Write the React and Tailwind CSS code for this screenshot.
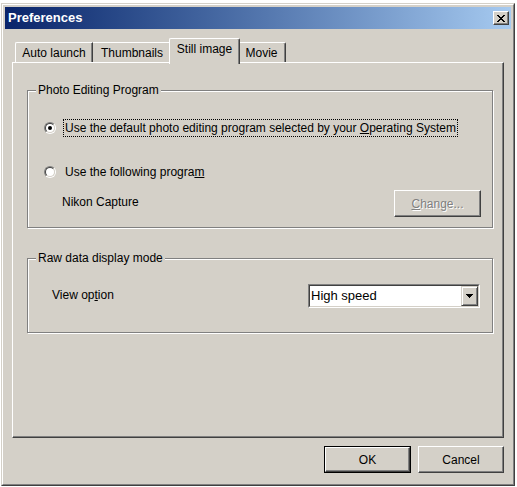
import React from "react";

const face = "bg-[#d4d0c8]";

function Radio({ checked }) {
  return (
    <div className="w-[12px] h-[12px] rounded-full border border-t-[#808080] border-l-[#808080] border-r-white border-b-white flex-none">
      <div className="w-full h-full rounded-full border border-t-[#404040] border-l-[#404040] border-r-[#d4d0c8] border-b-[#d4d0c8] bg-white flex items-center justify-center">
        {checked && <div className="w-[4px] h-[4px] rounded-full bg-black" />}
      </div>
    </div>
  );
}

function Button({ children, def, disabled, className = "" }) {
  const inner = (
    <div
      className={`w-full h-full flex items-center justify-center border border-t-white border-l-white border-r-[#404040] border-b-[#404040] shadow-[inset_-1px_-1px_0_#808080] ${face} ${
        disabled ? "text-[#808080] [text-shadow:1px_1px_0_#ffffff]" : "text-black"
      }`}
    >
      {children}
    </div>
  );
  if (def) {
    return <div className={`border border-black ${className}`}>{inner}</div>;
  }
  return <div className={className}>{inner}</div>;
}

function Group({ title, className = "", children }) {
  return (
    <div className={`relative border border-[#808080] shadow-[inset_1px_1px_0_#ffffff,1px_1px_0_#ffffff] ${className}`}>
      <span className={`absolute -top-[8px] left-[8px] px-[2px] leading-[14px] ${face}`}>{title}</span>
      {children}
    </div>
  );
}

export default function App() {
  return (
    <div className="w-[517px] h-[487px] bg-white pt-[3px] pl-[1px] font-['Liberation_Sans',Arial,sans-serif] text-[12px] leading-[14px] text-black">
      <div className={`w-[514px] h-[483px] border border-t-[#d4d0c8] border-l-[#d4d0c8] border-r-[#404040] border-b-[#404040] ${face}`}>
        <div className="h-full border border-t-white border-l-white border-r-[#808080] border-b-[#808080] p-[2px] flex flex-col">
          {/* Title bar */}
          <div className="h-[22px] flex-none flex items-center justify-between bg-gradient-to-r from-[#0a246a] to-[#a6caf0] pl-[3px] pr-[2px]">
            <span className="text-white font-bold text-[13px] leading-[16px]">Preferences</span>
            <div className={`w-[16px] h-[14px] flex items-center justify-center border border-t-white border-l-white border-r-[#404040] border-b-[#404040] shadow-[inset_-1px_-1px_0_#808080] ${face}`}>
              <svg width="8" height="7" viewBox="0 0 8 7" shapeRendering="crispEdges">
                <path
                  fill="#000"
                  d="M0 0h2v1H0zM6 0h2v1H6zM1 1h2v1H1zM5 1h2v1H5zM2 2h4v1H2zM3 3h2v1H3zM2 4h4v1H2zM1 5h2v1H1zM5 5h2v1H5zM0 6h2v1H0zM6 6h2v1H6z"
                />
              </svg>
            </div>
          </div>

          {/* Body */}
          <div className="flex-1 flex flex-col px-[7px] pt-[9px]">
            {/* Tabs */}
            <div className="flex items-end pl-[3px] h-[24px] flex-none">
              <div className="w-[78px] h-[20px] flex items-center justify-center border-t border-l border-t-white border-l-white border-r border-r-[#404040] shadow-[inset_-1px_0_0_#808080] rounded-tl-[2px]">
                Auto launch
              </div>
              <div className="w-[76px] h-[20px] flex items-center justify-center border-t border-t-white pl-[2px]">
                Thumbnails
              </div>
              <div className={`relative z-10 w-[71px] h-[26px] -mb-[2px] flex justify-center pt-[3px] border-t border-l border-t-white border-l-white border-r border-r-[#404040] shadow-[inset_-1px_0_0_#808080] rounded-t-[2px] ${face}`}>
                Still image
              </div>
              <div className="w-[46px] h-[20px] flex items-center justify-center border-t border-t-white border-r border-r-[#404040] shadow-[inset_-1px_0_0_#808080] rounded-tr-[2px] pr-[2px]">
                Movie
              </div>
            </div>

            {/* Panel */}
            <div className="h-[376px] flex-none flex flex-col border border-t-white border-l-white border-r-[#404040] border-b-[#404040] shadow-[inset_-1px_-1px_0_#808080] pt-[27px] pl-[14px] pr-[10px]">
              <Group title="Photo Editing Program" className="h-[138px] flex-none flex flex-col pt-[28px] pl-[16px] pr-[11px]">
                <div className="flex items-center h-[18px]">
                  <Radio checked />
                  <div className="ml-[7px] h-[18px] border border-dotted border-black px-[1px] flex items-center">
                    <span>
                      Use the default photo editing program selected by your <span className="underline">O</span>perating System
                    </span>
                  </div>
                </div>
                <div className="flex items-center h-[18px] mt-[26px]">
                  <Radio />
                  <div className="ml-[7px] h-[18px] border border-transparent px-[1px] flex items-center">
                    <span>
                      Use the following progra<span className="underline">m</span>
                    </span>
                  </div>
                </div>
                <div className="flex items-center justify-between mt-[9px] pl-[18px]">
                  <span className="-mt-[4px]">Nikon Capture</span>
                  <Button disabled className="w-[87px] h-[27px]">
                    <span>
                      <span className="underline">C</span>hange...
                    </span>
                  </Button>
                </div>
              </Group>

              <Group title="Raw data display mode" className="mt-[30px] h-[75px] flex-none flex items-start justify-between pt-[25px] pl-[24px] pr-[12px]">
                <span className="mt-[4px]">
                  View op<span className="underline">t</span>ion
                </span>
                <div className="w-[172px] h-[24px] border border-t-[#808080] border-l-[#808080] border-r-white border-b-white">
                  <div className="w-full h-full border border-t-[#404040] border-l-[#404040] border-r-[#d4d0c8] border-b-[#d4d0c8] bg-white flex items-center">
                    <span className="flex-1 pl-[1px] text-[13px]">High speed</span>
                    <div className={`w-[17px] h-full flex items-center justify-center border border-t-[#d4d0c8] border-l-[#d4d0c8] border-r-[#404040] border-b-[#404040] shadow-[inset_1px_1px_0_#ffffff,inset_-1px_-1px_0_#808080] ${face}`}>
                      <svg width="7" height="4" viewBox="0 0 7 4" shapeRendering="crispEdges">
                        <path fill="#000" d="M0 0h7v1H0zM1 1h5v1H1zM2 2h3v1H2zM3 3h1v1H3z" />
                      </svg>
                    </div>
                  </div>
                </div>
              </Group>
            </div>

            {/* Buttons */}
            <div className="flex justify-end gap-[7px] mt-[8px]">
              <Button def className="w-[87px] h-[27px]">OK</Button>
              <Button className="w-[86px] h-[27px]">Cancel</Button>
            </div>
          </div>
        </div>
      </div>
    </div>
  );
}
